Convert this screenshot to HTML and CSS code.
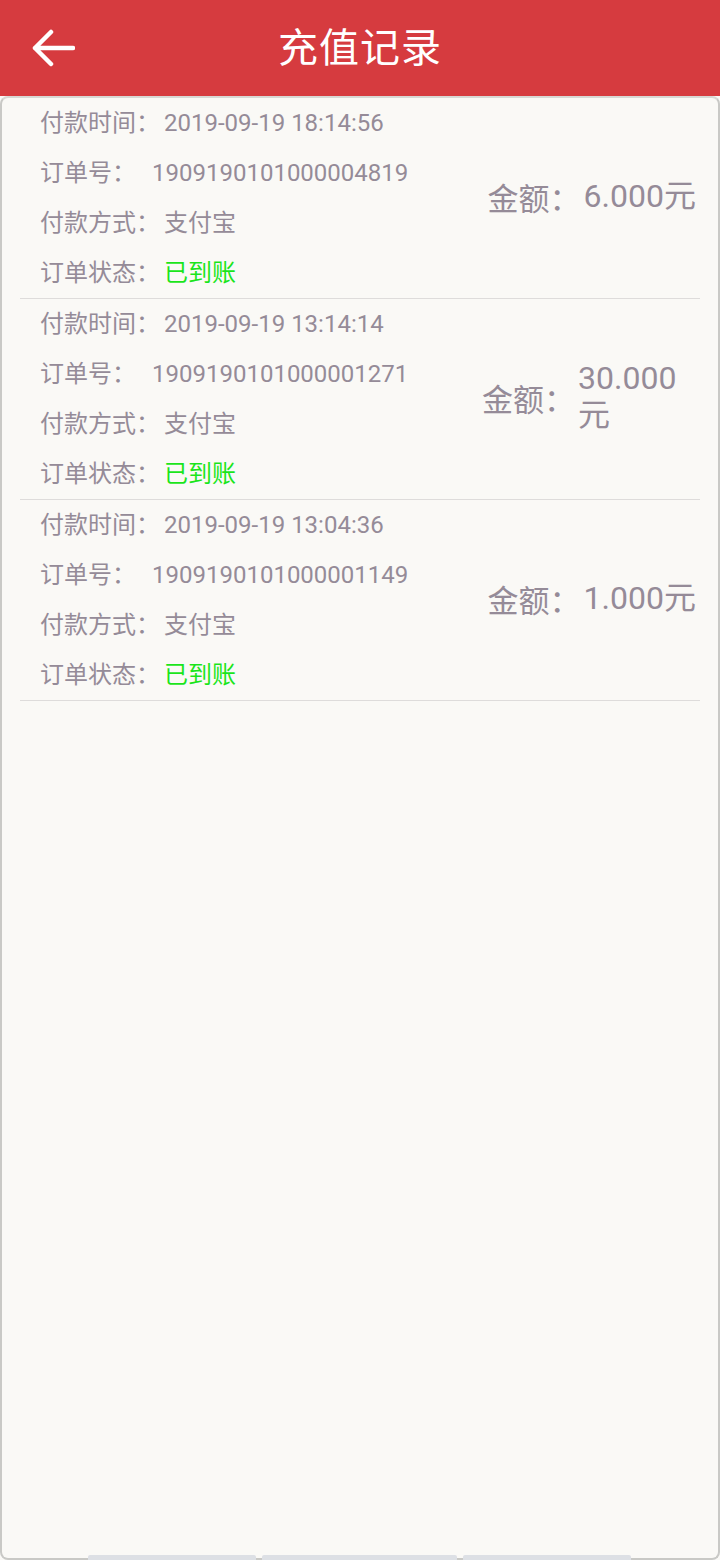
FILE: index.html
```html
<!DOCTYPE html>
<html lang="zh-CN">
<head>
    <meta charset="UTF-8">
    <meta name="viewport" content="width=device-width, initial-scale=1.0">
    <title>充值记录</title>
    <link rel="stylesheet" href="styles.css">
</head>
<body>

<!-- 顶部标题栏 -->
<div class="header">
    <a href="#" class="back">
        <svg width="44" height="40" viewBox="0 0 44 40">
            <path d="M4 20 H42 M20 4 L4 20 L20 36" fill="none" stroke="#fff" stroke-width="4.5" stroke-linecap="round" stroke-linejoin="round"/>
        </svg>
    </a>
    <h1>充值记录</h1>
</div>

<!-- 记录列表 -->
<div class="panel">
    <div class="record-list">
        <div class="record">
            <div class="info">
                <div class="line"><span class="label">付款时间：</span><span class="value">2019-09-19 18:14:56</span></div>
                <div class="line"><span class="label">订单号：</span><span class="value order">1909190101000004819</span></div>
                <div class="line"><span class="label">付款方式：</span><span class="value">支付宝</span></div>
                <div class="line"><span class="label">订单状态：</span><span class="value ok">已到账</span></div>
            </div>
            <div class="amount">
                <span class="amount-label">金额：</span>
                <span class="amount-value">6.000元</span>
            </div>
        </div>
        <div class="record">
            <div class="info">
                <div class="line"><span class="label">付款时间：</span><span class="value">2019-09-19 13:14:14</span></div>
                <div class="line"><span class="label">订单号：</span><span class="value order">1909190101000001271</span></div>
                <div class="line"><span class="label">付款方式：</span><span class="value">支付宝</span></div>
                <div class="line"><span class="label">订单状态：</span><span class="value ok">已到账</span></div>
            </div>
            <div class="amount">
                <span class="amount-label">金额：</span>
                <span class="amount-value">30.000元</span>
            </div>
        </div>
        <div class="record">
            <div class="info">
                <div class="line"><span class="label">付款时间：</span><span class="value">2019-09-19 13:04:36</span></div>
                <div class="line"><span class="label">订单号：</span><span class="value order">1909190101000001149</span></div>
                <div class="line"><span class="label">付款方式：</span><span class="value">支付宝</span></div>
                <div class="line"><span class="label">订单状态：</span><span class="value ok">已到账</span></div>
            </div>
            <div class="amount">
                <span class="amount-label">金额：</span>
                <span class="amount-value">1.000元</span>
            </div>
        </div>
    </div>

    <div class="tabs">
        <span class="tab tab1"></span>
        <span class="tab tab2"></span>
        <span class="tab tab3"></span>
    </div>
</div>

</body>
</html>
```

FILE: styles.css
```css
body {
    font-family: Roboto, "Noto Sans CJK SC", sans-serif;
    margin: 0;
    padding: 0;
    background-color: #faf9f6;
    width: 720px;
    height: 1560px;
    display: flex;
    flex-direction: column;
    overflow: hidden;
}

.header {
    height: 96px;
    background-color: #d63b3f;
    display: flex;
    align-items: center;
    justify-content: center;
    position: relative;
    flex-shrink: 0;
    box-sizing: border-box;
    padding-bottom: 6px;
}

.header h1 {
    margin: 0;
    font-size: 40px;
    font-weight: normal;
    color: #fff;
    letter-spacing: 1px;
}

.back {
    position: absolute;
    left: 31px;
    top: 28px;
    display: block;
    height: 40px;
}

.panel {
    flex: 1;
    border: 2px solid #c9c9c6;
    border-top-color: #d8d8d4;
    border-radius: 8px;
    background-color: #faf9f6;
    display: flex;
    flex-direction: column;
    justify-content: space-between;
}

.record-list {
    margin: 0 18px;
}

.record {
    display: flex;
    align-items: center;
    border-bottom: 1px solid #dedcdb;
    height: 201px;
    box-sizing: border-box;
}

.info {
    flex: 1;
    padding-left: 20px;
}

.line {
    height: 50px;
    line-height: 50px;
    font-size: 24px;
    color: #958b98;
    white-space: nowrap;
}

.label {
    display: inline-block;
    min-width: 124px;
}

.value.order {
    margin-left: -12px;
}

.value.ok {
    color: #1be51b;
}

.amount {
    display: flex;
    align-items: center;
    justify-content: flex-end;
    padding-right: 4px;
    color: #958b98;
    font-size: 31px;
    margin-top: -4px;
}

.amount-label {
    white-space: nowrap;
    padding-right: 3px;
}

.amount-value {
    font-size: 32px;
    max-width: 118px;
    line-height: 37px;
}

.tabs {
    display: flex;
    padding-left: 86px;
    gap: 6px;
    margin-bottom: -2px;
}

.tab {
    height: 5px;
    background-color: #dde0e5;
    border-radius: 2px 2px 0 0;
}

.tab1 {
    width: 168px;
}

.tab2 {
    width: 195px;
}

.tab3 {
    width: 168px;
}
```
